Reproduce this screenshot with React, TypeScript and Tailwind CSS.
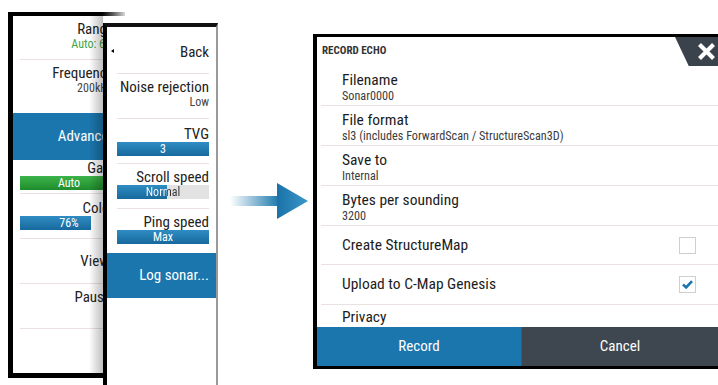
import React from "react";

const F = "font-['Roboto','Liberation_Sans',sans-serif] font-stretch-[80%]";

function Sep() {
  return <div className="h-px bg-[#eadfe2] mx-[7px]" />;
}

function Bar({ label, pct }: { label: string; pct: number }) {
  return (
    <div className="relative h-[14px] bg-[#e2e2e2]">
      <div className="absolute inset-y-0 left-0 bg-gradient-to-b from-[#2f8dc3] to-[#17699d]" style={{ width: `${pct}%` }} />
      <div
        className="relative w-full text-center text-[12px] leading-[14px] bg-clip-text text-transparent"
        style={{ backgroundImage: `linear-gradient(to right, #ffffff ${pct}%, #333333 ${pct}%)` }}
      >
        {label}
      </div>
    </div>
  );
}

function FullBar({ label, color }: { label: string; color: "blue" | "green" }) {
  const fill =
    color === "green"
      ? "bg-gradient-to-b from-[#3cb44a] to-[#1f8c2c]"
      : "bg-gradient-to-b from-[#2f8dc3] to-[#17699d]";
  return (
    <div className={`h-[14px] w-full ${fill} flex items-center justify-center text-[12px] leading-[14px] text-white`}>{label}</div>
  );
}

function Panel1() {
  return (
    <div className="relative ml-[8px] mt-[12px] w-[117px] h-[366px] shrink-0 flex flex-col bg-white whitespace-nowrap">
      <div className="h-[4px] bg-gradient-to-r from-black from-[78%] to-[#d8d8d8]" />
      <div className="flex-1 flex flex-col border-l-[5px] border-b-[5px] border-black text-right text-[#222]">
        <div className="h-[43px] pt-[5px] pr-[11px]">
          <div className="text-[15px] leading-[16px]">Range</div>
          <div className="text-[12px] leading-[14px] text-[#3aa64a]">Auto: 6m</div>
        </div>
        <Sep />
        <div className="h-[53px] pt-[5px] pr-[12px]">
          <div className="text-[15px] leading-[16px]">Frequency</div>
          <div className="text-[12px] leading-[14px] text-[#444]">200kHz</div>
        </div>
        <div className="h-[47px] bg-[#1b76ad] text-white text-[15px] flex items-center justify-end pr-[9px]">Advanced</div>
        <div className="h-[33px] px-[7px]">
          <div className="text-[15px] leading-[16px] pr-[4px]">Gain</div>
          <FullBar label="Auto" color="green" />
        </div>
        <Sep />
        <div className="h-[44px] pt-[6px] px-[7px]">
          <div className="text-[15px] leading-[16px] pr-[4px]">Color</div>
          <div className="relative h-[14px]">
            <div className="absolute inset-y-0 left-0 w-[71px] bg-gradient-to-b from-[#2f8dc3] to-[#17699d]" />
            <div className="relative text-center text-[12px] leading-[14px] text-white">76%</div>
          </div>
        </div>
        <Sep />
        <div className="h-[44px] flex items-center justify-end pr-[16px] text-[15px]">View</div>
        <Sep />
        <div className="h-[44px] pt-[5px] pr-[14px] text-[15px] leading-[16px]">Pause</div>
        <Sep />
        <div className="flex-1" />
      </div>
      <div className="absolute top-[4px] bottom-[5px] right-[22px] w-[14px] bg-gradient-to-r from-transparent to-black/25" />
    </div>
  );
}

function Panel2() {
  return (
    <div className="relative z-10 ml-[-22px] mt-[23px] w-[115px] h-[362px] shrink-0 bg-white border-l-[4px] border-t-[4px] border-r-2 border-l-black border-t-[#111] border-r-[#9a9a9a] text-right text-[#222] whitespace-nowrap">
      <div className="relative h-[46px] pt-[17px] pr-[7px] text-[15px] leading-[16px]">
        <div className="absolute left-[4px] top-[22px] w-0 h-0 border-y-[2px] border-y-transparent border-r-[3px] border-r-black" />
        Back
      </div>
      <div className="h-px bg-[#eadfe2] ml-[10px] mr-[7px]" />
      <div className="h-[44px] pt-[5px] pr-[7px]">
        <div className="text-[15px] leading-[16px]">Noise rejection</div>
        <div className="text-[12px] leading-[14px] text-[#444]">Low</div>
      </div>
      <div className="h-px bg-[#eadfe2] ml-[10px] mr-[7px]" />
      <div className="h-[44px] pt-[7px] pl-[10px] pr-[7px]">
        <div className="text-[15px] leading-[16px]">TVG</div>
        <FullBar label="3" color="blue" />
      </div>
      <div className="h-px bg-[#eadfe2] ml-[10px] mr-[7px]" />
      <div className="h-[44px] pt-[5px] pl-[10px] pr-[7px]">
        <div className="text-[15px] leading-[16px]">Scroll speed</div>
        <Bar label="Normal" pct={54} />
      </div>
      <div className="h-px bg-[#eadfe2] ml-[10px] mr-[7px]" />
      <div className="h-[44px] pt-[5px] pl-[10px] pr-[7px]">
        <div className="text-[15px] leading-[16px]">Ping speed</div>
        <FullBar label="Max" color="blue" />
      </div>
      <div className="h-[45px] bg-[#1b76ad] text-white text-[15px] flex items-center justify-end pr-[7px]">Log sonar...</div>
    </div>
  );
}

function Arrow() {
  return (
    <svg className="ml-[12px] mt-[182px] shrink-0" width="80" height="38" viewBox="0 0 80 38">
      <defs>
        <linearGradient id="shaft" x1="0" x2="1" y1="0" y2="0">
          <stop offset="0" stopColor="#1c78ad" stopOpacity="0" />
          <stop offset="1" stopColor="#1c78ad" stopOpacity="1" />
        </linearGradient>
        <linearGradient id="head" x1="0" x2="1" y1="0" y2="0">
          <stop offset="0" stopColor="#1a72a8" />
          <stop offset="1" stopColor="#3b97c8" />
        </linearGradient>
      </defs>
      <rect x="0" y="14" width="49" height="10" fill="url(#shaft)" />
      <polygon points="47,1 78,19 47,37" fill="url(#head)" />
    </svg>
  );
}

function Check({ checked }: { checked: boolean }) {
  return (
    <div className="w-[17px] h-[17px] border border-[#cfcfcf] bg-white flex items-center justify-center">
      {checked && (
        <svg width="15" height="15" viewBox="0 0 15 15">
          <polyline points="3,7.5 6.2,10.5 12,4.2" fill="none" stroke="#1b76ad" strokeWidth="2.6" />
        </svg>
      )}
    </div>
  );
}

function Row2({ label, value }: { label: string; value: string }) {
  return (
    <div className="h-[40px] ml-[4px] pl-[21px] pt-[6px] border-b border-[#ebe1e3]">
      <div className="text-[15.5px] leading-[17px] text-[#1c1c1c]">{label}</div>
      <div className="text-[12.2px] leading-[15px] font-stretch-[85%] text-[#3c3c3c]">{value}</div>
    </div>
  );
}

function Row1({ label, checked, h }: { label: string; checked: boolean; h: string }) {
  return (
    <div className={`${h} ml-[4px] pl-[21px] pr-[22px] border-b border-[#ebe1e3] flex items-center justify-between`}>
      <div className="text-[15.5px] leading-[17px] text-[#1c1c1c]">{label}</div>
      <Check checked={checked} />
    </div>
  );
}

function Dialog() {
  return (
    <div className="ml-[3px] mt-[34px] w-[405px] h-[335px] shrink-0 flex flex-col bg-white border-l-[4px] border-t-[3px] border-b-[3px] border-black whitespace-nowrap">
      <div className="relative h-[29px] pl-[5px] flex items-center text-[11px] font-bold text-[#333]">
        RECORD ECHO
        <div className="absolute top-0 right-0 w-[43px] h-[29px] bg-[#3a434c] [clip-path:polygon(0_0,100%_0,100%_100%,32%_100%)]">
          <svg className="absolute left-[22px] top-[5px]" width="19" height="19" viewBox="0 0 19 19">
            <path d="M2.5 2.5 L16.5 16.5 M16.5 2.5 L2.5 16.5" stroke="white" strokeWidth="4.2" />
          </svg>
        </div>
      </div>
      <Row2 label="Filename" value="Sonar0000" />
      <Row2 label="File format" value="sl3 (includes ForwardScan / StructureScan3D)" />
      <Row2 label="Save to" value="Internal" />
      <Row2 label="Bytes per sounding" value="3200" />
      <Row1 label="Create StructureMap" checked={false} h="h-[39px]" />
      <Row1 label="Upload to C-Map Genesis" checked={true} h="h-[40px]" />
      <div className="h-[22px] ml-[4px] pl-[21px] pt-[4px] text-[15.5px] leading-[17px] text-[#1c1c1c]">Privacy</div>
      <div className="flex-1 flex text-white text-[15px]">
        <div className="w-[204px] bg-[#1b76ad] flex items-center justify-center">Record</div>
        <div className="w-px bg-[#2a5f80]" />
        <div className="flex-1 bg-[#3e4750] flex items-center justify-center">Cancel</div>
      </div>
    </div>
  );
}

export default function App() {
  return (
    <div className={`w-[718px] h-[385px] overflow-hidden bg-white flex items-start ${F}`}>
      <Panel1 />
      <Panel2 />
      <Arrow />
      <Dialog />
    </div>
  );
}
